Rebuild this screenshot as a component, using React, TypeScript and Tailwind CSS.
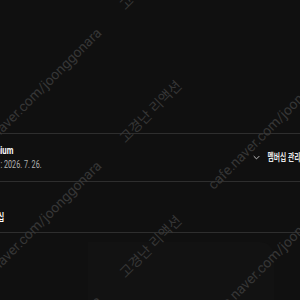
const marks = [
  { pos: "top-[149px]", tail: true },
  { pos: "top-[282px]", tail: false },
  { pos: "top-[417px]", tail: true },
  { pos: "top-[549px]", tail: true },
];

const Watermark = ({ pos, tail }: { pos: string; tail: boolean }) => (
  <div
    className={`pointer-events-none absolute left-[-28px] ${pos} flex h-[16px] origin-left -rotate-45 items-center whitespace-nowrap text-[14px] leading-[16px] text-[#363636]`}
  >
    <span className="w-[172px] shrink-0">cafe.naver.com/joonggonara</span>
    <span className="w-[40px] shrink-0" />
    <span className="w-[85px] shrink-0">고경난 리액션</span>
    <span className="w-[40px] shrink-0" />
    {tail && <span className="w-[172px] shrink-0">cafe.naver.com/joonggonara</span>}
  </div>
);

export default function App() {
  return (
    <div className="relative h-[300px] w-[300px] overflow-hidden bg-[#101010] font-['Roboto','Noto_Sans_CJK_KR',sans-serif]">
      <div className="h-[133px]" />

      {/* membership row */}
      <div className="flex h-[48px] items-center justify-between border-t border-[#2e2e2e]">
        <div className="flex flex-col">
          <div className="flex w-[13px] justify-end">
            <span className="shrink-0 origin-right scale-x-[0.7] whitespace-nowrap text-[11px] font-bold leading-[14px] text-white">
              YouTube Premium
            </span>
          </div>
          <div className="flex w-[42px] justify-end">
            <span className="shrink-0 origin-right scale-x-[0.72] whitespace-nowrap text-[10px] leading-[13px] text-[#b0b0b0]">
              다음 결제일: 2026. 7. 26.
            </span>
          </div>
        </div>
        <div className="flex shrink-0 items-center">
          <svg
            viewBox="0 0 10 6"
            className="h-[5px] w-[7px] text-[#cfcfcf]"
            fill="none"
            stroke="currentColor"
            strokeWidth={1.3}
          >
            <path d="M1 1l4 4 4-4" />
          </svg>
          <div className="flex w-[40px] justify-end">
            <span className="shrink-0 origin-right scale-x-[0.68] whitespace-nowrap text-[10px] font-bold leading-[12px] text-[#e8e8e8]">
              멤버십 관리
            </span>
          </div>
        </div>
      </div>

      <div className="h-[51px] border-t border-[#2e2e2e] pt-[30px]">
        <div className="flex w-[4px] justify-end">
          <span className="shrink-0 origin-right scale-x-[0.7] whitespace-nowrap text-[10px] font-bold leading-[12px] text-white">
            혜택 및 멤버십
          </span>
        </div>
      </div>

      <div className="border-t border-[#2e2e2e] pt-[9px]">
        <div className="ml-[88px] h-[60px] w-[186px] rounded-tr-[14px] bg-[#121212]" />
      </div>

      {marks.map((m) => (
        <Watermark key={m.pos} pos={m.pos} tail={m.tail} />
      ))}
    </div>
  );
}
